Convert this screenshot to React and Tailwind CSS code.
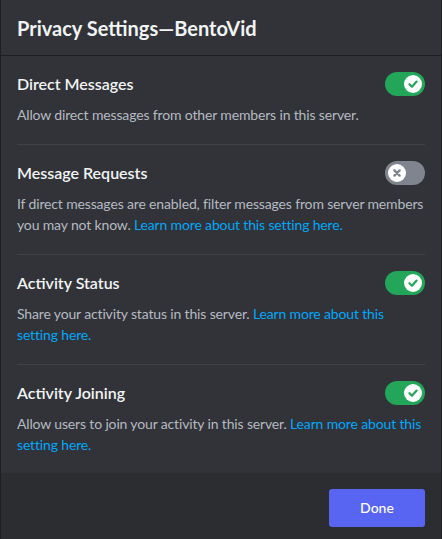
import React from "react";

function Toggle({ on }) {
  return (
    <div
      className={`flex h-6 w-10 shrink-0 items-center rounded-full px-[3px] ${
        on ? "justify-end bg-[#23a55a]" : "justify-start bg-[#80848e]"
      }`}
    >
      <div className="flex h-[18px] w-[18px] items-center justify-center rounded-full bg-white">
        {on ? (
          <svg width="12" height="12" viewBox="0 0 12 12">
            <path d="M2.4 6.2 L5 8.7 L9.6 3.6" fill="none" stroke="#23a55a" strokeWidth="2.2" strokeLinecap="round" strokeLinejoin="round" />
          </svg>
        ) : (
          <svg width="12" height="12" viewBox="0 0 12 12">
            <path d="M3.4 3.4 L8.6 8.6 M8.6 3.4 L3.4 8.6" fill="none" stroke="#80848e" strokeWidth="2.4" strokeLinecap="round" />
          </svg>
        )}
      </div>
    </div>
  );
}

function Section({ title, desc, link, on, last }) {
  return (
    <div className={last ? "" : "mb-4 border-b border-[#3f4147] pb-[19px]"}>
      <div className="flex h-6 items-center justify-between">
        <div className="text-base font-semibold text-[#f2f3f5]">{title}</div>
        <Toggle on={on} />
      </div>
      <div className="mt-2 text-sm leading-[21px] tracking-[-0.15px] text-[#b5bac1]">
        {desc}
        {link && (
          <>
            {" "}
            <span className="text-[#00a8fc]">Learn more about this setting here.</span>
          </>
        )}
      </div>
    </div>
  );
}

export default function App() {
  return (
    <div
      className="flex h-[539px] w-[442px] flex-col overflow-hidden border-x border-[#1e1f22] bg-[#313338]"
      style={{ fontFamily: 'Lato, sans-serif' }}
    >
      <div className="flex h-14 shrink-0 items-center border-b border-[#1e1f22] px-4">
        <h1 className="text-xl font-bold text-[#f2f3f5]">Privacy Settings—BentoVid</h1>
      </div>
      <div className="flex-1 px-4 pt-4">
        <Section title="Direct Messages" desc="Allow direct messages from other members in this server." on />
        <Section
          title="Message Requests"
          desc="If direct messages are enabled, filter messages from server members you may not know."
          link
          on={false}
        />
        <Section title="Activity Status" desc="Share your activity status in this server." link on />
        <Section title="Activity Joining" desc="Allow users to join your activity in this server." link on last />
      </div>
      <div className="flex h-[66px] shrink-0 items-start justify-end bg-[#2b2d31] px-4 pt-4">
        <button className="h-[38px] w-24 rounded-[3px] bg-[#5865f2] text-sm font-medium text-white">Done</button>
      </div>
    </div>
  );
}
